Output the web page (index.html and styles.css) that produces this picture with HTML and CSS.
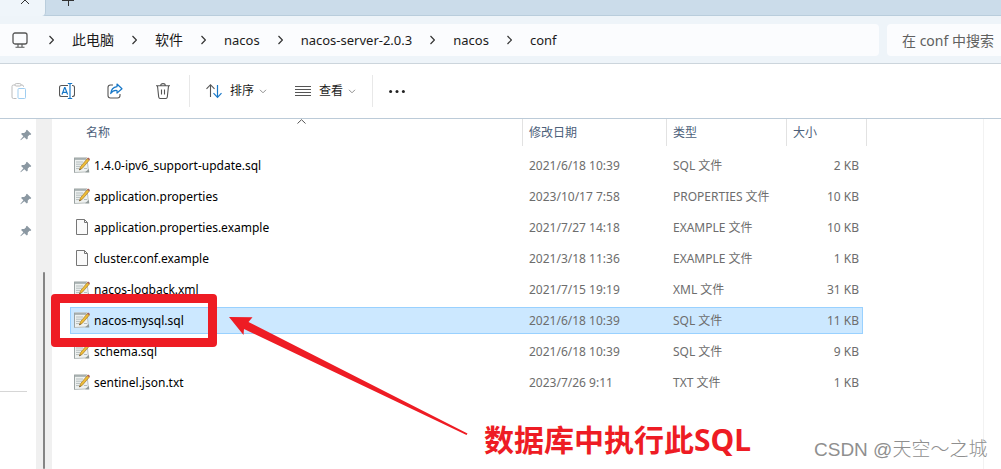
FILE: index.html
```html
<!DOCTYPE html>
<html lang="zh-CN">
<head>
<meta charset="utf-8">
<title>conf</title>
<link rel="stylesheet" href="styles.css">
</head>
<body>
<svg class="defs" aria-hidden="true">
  <symbol id="chev" viewBox="0 0 5 10"><path d="M.5 1 4.4 5 .5 9" fill="none" stroke="#333" stroke-width="1.2"/></symbol>
  <symbol id="down" viewBox="0 0 8 5"><path d="M1 .8 4 3.8 7 .8" fill="none" stroke="#8f8f8f"/></symbol>
  <symbol id="pin" viewBox="0 0 12 12"><path d="M7 .7 11.3 5 10.4 5.9 9.6 5.8 7.8 7.6 7.7 9.8 6.8 10.6 4.3 8.2.8 11.2.4 10.8 3.4 7.3 1.1 5 2 4.1 4.2 4 6.1 2.200 6 1.500Z" fill="#8b98a2"/></symbol>
  <symbol id="note" viewBox="0 0 16 16">
    <path d="M.5.800h12.500l1.500 14-14 .700Z" fill="#eef1f0" stroke="#b9bfbe"/>
    <path d="M.5 15.500V.800" stroke="#9ba3a3"/>
    <path d="M1 1.200h11v1.500H1Z" fill="#98a3a3"/>
    <path d="M2 5h7M2 7.200h6M2 9.400h4M2 11.600h3M10 11.500h3" stroke="#b4bdbd"/>
    <path d="M11 15.300 14.900 12l.4 3.500Z" fill="#8f9897"/>
    <path d="M5.400 13 6.500 9.700 13.200 1.700l2 1.600L8.300 11.300Z" fill="#eebd35" stroke="#a2772b" stroke-width=".7"/>
    <path d="m13.100 1.600 1-1.100 2 1.600-.9 1.200Z" fill="#a85b50"/>
    <path d="M5.300 13.100 5.800 11.500l1 .8Z" fill="#333"/>
  </symbol>
  <symbol id="page" viewBox="0 0 16 16"><path d="M2.500.5h8l3 3v12h-11Z" fill="#fafafa" stroke="#767676"/><path d="M10.500.5v3h3" fill="none" stroke="#767676"/></symbol>
</svg>

<div class="tabs">
  <div class="tab"><button class="tab-close" aria-label="关闭"><svg width="10" height="10" viewBox="0 0 10 10"><path d="m1 1 8 8M9 1 1 9" stroke="#333"/></svg></button></div>
  <button class="tab-new" aria-label="新建"><svg width="12" height="12" viewBox="0 0 12 12"><path d="M0 6.500h12M6.500 0v12" stroke="#333"/></svg></button>
</div>

<div class="location">
  <nav class="address" aria-label="地址">
    <svg class="pc" viewBox="0 0 16 16"><rect x="1" y="1" width="14" height="11" rx="2" fill="none" stroke="#555" stroke-width="1.300"/><path d="M6 12v3M10 12v3M3.500 15.200h9" stroke="#555" stroke-width="1.100"/></svg>
    <svg class="chev"><use href="#chev"/></svg><a class="han" href="#">此电脑</a>
    <svg class="chev"><use href="#chev"/></svg><a class="han" href="#">软件</a>
    <svg class="chev"><use href="#chev"/></svg><a href="#">nacos</a>
    <svg class="chev"><use href="#chev"/></svg><a href="#">nacos-server-2.0.3</a>
    <svg class="chev"><use href="#chev"/></svg><a href="#">nacos</a>
    <svg class="chev"><use href="#chev"/></svg><a href="#">conf</a>
  </nav>
  <input class="search" type="text" placeholder="在 conf 中搜索" aria-label="搜索">
</div>

<div class="toolbar">
  <div class="tools">
    <button aria-label="粘贴"><svg class="icon" viewBox="0 0 16 16" fill="none"><path d="M4 2H2.500Q1 2 1 3.500v10.500q0 1.500 1.500 1.500H5.500M10 2h1q1.500 0 1.500 1.500V4" stroke="#bcbcbc"/><rect x="4" y=".6" width="6" height="2.400" rx="1.200" stroke="#bcbcbc"/><rect x="7" y="5.500" width="7.500" height="10" rx="1" stroke="#9fcdf0"/></svg></button>
    <button aria-label="重命名"><svg class="icon" viewBox="0 0 16 16" fill="none"><path d="M9 2.500H2.500Q.5 2.500.5 4.500v7q0 2 2 2H9M13 2.500h.5q2 0 2 2v7q0 2-2 2H13" stroke="#555" stroke-width="1.100"/><path d="M3 11.500 5.600 4.500h.4L8.600 11.500M4 9.300h3.700M11 .5v15M8.800.5h4.400M8.800 15.500h4.400" stroke="#1878c8" stroke-width="1.200"/></svg></button>
    <button aria-label="共享"><svg class="icon" viewBox="0 0 16 16" fill="none"><path d="M6 2H3.500Q1 2 1 4.500v8Q1 15 3.500 15h7q2.500 0 2.500-2.500V11" stroke="#555" stroke-width="1.100"/><path d="M10 1 15 5.700 10 10V7.500Q6 7 3.700 10.500 4.300 4.500 10 3.700Z" stroke="#1878c8" stroke-width="1.200" stroke-linejoin="round"/></svg></button>
    <button aria-label="删除"><svg class="icon" viewBox="0 0 16 16" fill="none" stroke="#555" stroke-width="1.100"><path d="M1 2.700h14M5.700 2.500Q5.700.6 8 .6t2.300 1.900M2.500 3l1.200 11q.2 1.500 1.600 1.500h5.400q1.400 0 1.600-1.500L13.500 3M6.500 6.500v5M9.500 6.500v5"/></svg></button>
  </div>
  <div class="group">
    <button class="menu"><svg class="icon" viewBox="0 0 16 16" fill="none"><path d="M4.500 14V2M.5 5.800 4.500 1.700l4 4.100" stroke="#555" stroke-width="1.100"/><path d="M11.500 2v12M7.500 10.200l4 4.100 4-4.100" stroke="#1878c8" stroke-width="1.200"/></svg>排序<svg class="down"><use href="#down"/></svg></button>
    <button class="menu"><svg class="icon" viewBox="0 0 16 16"><path d="M0 3.500h16M0 6.500h16M0 9.500h16M0 12.500h16" stroke="#555"/></svg>查看<svg class="down"><use href="#down"/></svg></button>
  </div>
  <button class="more" aria-label="更多"><svg class="icon" viewBox="0 0 16 16" fill="#222"><circle cx="1.600" cy="8.500" r="1.500"/><circle cx="8" cy="8.500" r="1.500"/><circle cx="14.400" cy="8.500" r="1.500"/></svg></button>
</div>

<div class="main">
  <aside class="side">
    <svg class="pin"><use href="#pin"/></svg>
    <svg class="pin"><use href="#pin"/></svg>
    <svg class="pin"><use href="#pin"/></svg>
    <svg class="pin"><use href="#pin"/></svg>
    <hr>
  </aside>
  <div class="scroll"><div class="thumb"></div></div>
  <main class="files">
    <table>
      <colgroup><col class="c-name"><col class="c-date"><col class="c-type"><col class="c-size"></colgroup>
      <thead><tr>
        <th><div class="head first">名称<svg class="sort" viewBox="0 0 9 5"><path d="M.5 4.500 4.500.700l4 3.800" fill="none" stroke="#555"/></svg></div></th>
        <th><div class="head">修改日期</div></th><th><div class="head">类型</div></th><th><div class="head">大小</div></th>
      </tr></thead>
      <tbody>
        <tr><td><svg class="file"><use href="#note"/></svg>1.4.0-ipv6_support-update.sql</td><td>2021/6/18 10:39</td><td>SQL 文件</td><td>2 KB</td></tr>
        <tr><td><svg class="file"><use href="#note"/></svg>application.properties</td><td>2023/10/17 7:58</td><td>PROPERTIES 文件</td><td>10 KB</td></tr>
        <tr><td><svg class="file"><use href="#page"/></svg>application.properties.example</td><td>2021/7/27 14:18</td><td>EXAMPLE 文件</td><td>10 KB</td></tr>
        <tr><td><svg class="file"><use href="#page"/></svg>cluster.conf.example</td><td>2021/3/18 11:36</td><td>EXAMPLE 文件</td><td>1 KB</td></tr>
        <tr><td><svg class="file"><use href="#note"/></svg>nacos-logback.xml</td><td>2021/7/15 19:19</td><td>XML 文件</td><td>31 KB</td></tr>
        <tr class="selected"><td><svg class="file"><use href="#note"/></svg>nacos-mysql.sql</td><td>2021/6/18 10:39</td><td>SQL 文件</td><td>11 KB</td></tr>
        <tr><td><svg class="file"><use href="#note"/></svg>schema.sql</td><td>2021/6/18 10:39</td><td>SQL 文件</td><td>9 KB</td></tr>
        <tr><td><svg class="file"><use href="#note"/></svg>sentinel.json.txt</td><td>2023/7/26 9:11</td><td>TXT 文件</td><td>1 KB</td></tr>
      </tbody>
    </table>
  </main>
</div>

<div class="mark-box"></div>
<svg class="mark-arrow" viewBox="0 0 240 120"><path d="M0 0 23.500.300 19.500 5 238.500 116.500 237.500 118 15 12 14.500 18Z" fill="#ee1c24"/></svg>
<div class="mark-text">数据库中执行此SQL</div>
<div class="watermark">CSDN @天空～之城</div>
</body>
</html>
```
FILE: styles.css
```css
* { box-sizing: border-box; }
body {
  margin: 0;
  min-height: 100vh;
  display: flex;
  flex-direction: column;
  position: relative;
  overflow: hidden;
  background: #fff;
  color: #1b1b1b;
  font: 12px/16px "Noto Sans", "Noto Sans CJK SC", sans-serif;
}
button { border: 0; padding: 0; background: none; color: inherit; font: inherit; display: flex; align-items: center; }
svg { display: block; flex: none; }
.defs { position: absolute; width: 0; height: 0; }

.tabs { display: flex; height: 16px; background: #cbdcea; border-bottom: 1px solid #b9cddc; }
.tab { width: 46px; height: 16px; background: #eff5fa; border-right: 1px solid #b9cddc; border-bottom-right-radius: 4px; overflow: hidden; }
.tab-close { margin: -5px 0 0 20px; }
.tab-new { height: 12px; margin: -6px 0 0 16px; }

.location { display: flex; gap: 8px; padding: 8px 0 7px; background: #eef4f9; border-bottom: 1px solid #ccd5dc; }
.address { flex: 1; display: flex; align-items: center; gap: 18px; height: 32px; padding-left: 12px; background: #fbfcfe; border-radius: 0 4px 4px 0; font-size: 13px; }
.address a { color: inherit; text-decoration: none; white-space: nowrap; }
.address .han { font-size: 14px; }
.pc { width: 16px; height: 16px; margin-right: 3px; }
.chev { width: 5px; height: 10px; }
.search { width: 114px; height: 32px; border: 0; border-radius: 4px 0 0 4px; padding: 0 0 0 15px; background: #fbfcfe; font: inherit; font-size: 14px; }
.search::placeholder { color: #606060; opacity: 1; }

.toolbar { display: flex; align-items: center; height: 55px; padding-left: 11px; border-bottom: 1px solid #bccbd8; }
.icon { width: 16px; height: 16px; }
.tools { display: flex; gap: 32px; padding-right: 18px; }
.group { display: flex; align-items: center; gap: 28px; height: 32px; padding: 0 16px; border: solid #e8e8e8; border-width: 0 1px; }
.menu { gap: 8px; line-height: 18px; }
.down { width: 8px; height: 5px; margin-left: -3px; }
.more { margin-left: 16px; }

.main { flex: 1; display: flex; }
.side { width: 36px; padding-top: 10px; display: flex; flex-direction: column; gap: 20px; align-items: flex-end; }
.pin { width: 12px; height: 12px; margin-right: 4px; }
.side hr { width: 27px; margin: 134px 9px 0 0; border: 0; border-top: 1px solid #d6d6d6; }
.scroll { width: 16px; background: #f0f0f0; padding: 153px 7px 0; display: flex; }
.thumb { width: 2px; background: #858585; border-radius: 1px; }
.files { flex: 1; margin-right: 17px; padding-left: 18px; border-right: 1px solid #f2f2f2; }

table { table-layout: fixed; width: 797px; border-collapse: separate; border-spacing: 0; }
.c-name { width: 453px; }
.c-date { width: 144px; }
.c-type { width: 120px; }
.c-size { width: 80px; }
th { padding: 0; height: 31px; vertical-align: top; text-align: left; font-weight: 400; color: #4c607a; }
.head { height: 27px; padding: 6px 0 0 6px; border-right: 1px solid #e2e2e2; }
.head.first { position: relative; margin-left: 10px; }
.sort { position: absolute; top: 0; left: 50%; width: 9px; height: 5px; margin-left: -4px; }
td { height: 31px; padding: 0 6px; border: solid transparent; border-width: 2px 0; background-clip: padding-box; color: #6d6d6d; white-space: nowrap; }
td:first-child { padding: 0 0 0 24px; color: #000; position: relative; }
td:last-child { border-right-width: 4px; padding-right: 4px; text-align: right; }
.file { position: absolute; left: 4px; top: 5px; width: 16px; height: 16px; }
.selected td { background-color: #cce8ff; box-shadow: inset 0 1px #99d1ff, inset 0 -1px #99d1ff; }
.selected td:first-child { box-shadow: inset 0 1px #99d1ff, inset 0 -1px #99d1ff, inset 1px 0 #99d1ff; }
.selected td:last-child { box-shadow: inset 0 1px #99d1ff, inset 0 -1px #99d1ff, inset -1px 0 #99d1ff; }

.mark-box { position: absolute; left: 51px; top: 294px; width: 166px; height: 53px; border: 9px solid #ee1c24; border-radius: 4px; }
.mark-arrow { position: absolute; left: 229px; top: 317px; width: 240px; height: 120px; }
.mark-text { position: absolute; left: 484px; top: 421px; color: #ee1c24; font-size: 30px; line-height: 38px; font-weight: 700; white-space: nowrap; }
.watermark { position: absolute; left: 814px; top: 438px; color: #8f8f8f; font: 300 19px/24px "Liberation Sans", "Noto Sans CJK SC", sans-serif; white-space: nowrap; }
```
